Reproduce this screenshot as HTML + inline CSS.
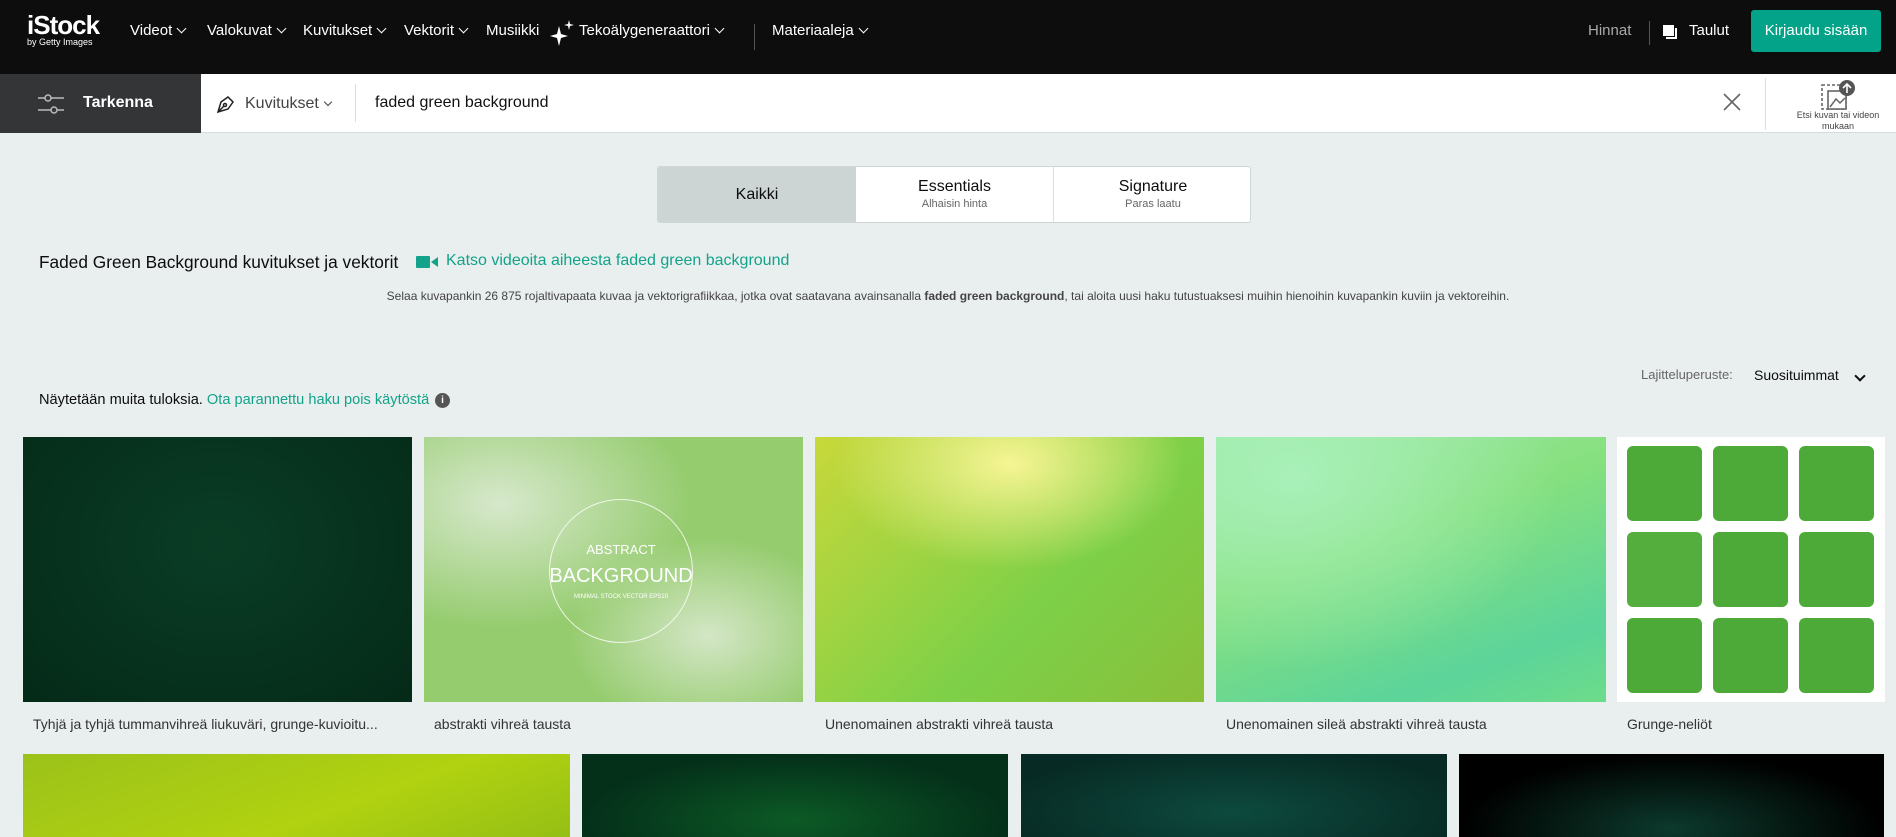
<!DOCTYPE html>
<html><head><meta charset="utf-8"><style>
*{box-sizing:border-box;margin:0;padding:0}
body{width:1896px;height:837px;overflow:hidden;background:#e9eeee;font-family:"Liberation Sans",sans-serif;position:relative;color:#0c0d0c}
.abs{position:absolute}
.hdr{left:0;top:0;width:1896px;height:74px;background:#0c0d0c;color:#fff}
.nav{top:22px;font-size:15px;color:#fff;white-space:nowrap}
.chev{display:inline-block;width:7px;height:7px;border-right:1.6px solid currentColor;border-bottom:1.6px solid currentColor;transform:rotate(45deg);margin-left:6px;position:relative;top:-3px}
.img{position:absolute}
.cap{position:absolute;top:716px;font-size:14px;color:#333}
</style></head><body>
<div class="abs hdr">
 <div class="abs" style="left:27px;top:10px;font-size:26px;font-weight:bold;letter-spacing:-1px">iStock</div>
 <div class="abs" style="left:27px;top:37px;font-size:9px">by Getty Images</div>
 <div class="abs nav" style="left:130px">Videot<span class="chev"></span></div>
 <div class="abs nav" style="left:207px">Valokuvat<span class="chev"></span></div>
 <div class="abs nav" style="left:303px">Kuvitukset<span class="chev"></span></div>
 <div class="abs nav" style="left:404px">Vektorit<span class="chev"></span></div>
 <div class="abs nav" style="left:486px">Musiikki</div>
 <svg class="abs" style="left:550px;top:20px" width="24" height="26" viewBox="0 0 24 26"><path d="M9 6 L11 14 L18 16 L11 18 L9 26 L7 18 L0 16 L7 14Z" fill="#fff"/><path d="M19 0 L20 4 L24 5 L20 6 L19 10 L18 6 L14 5 L18 4Z" fill="#fff"/></svg>
 <div class="abs nav" style="left:579px">Tekoälygeneraattori<span class="chev"></span></div>
 <div class="abs" style="left:754px;top:24px;width:1px;height:26px;background:#555"></div>
 <div class="abs nav" style="left:772px">Materiaaleja<span class="chev"></span></div>
 <div class="abs nav" style="left:1588px;color:#aaa">Hinnat</div>
 <div class="abs" style="left:1649px;top:21px;width:1px;height:24px;background:#555"></div>
 <div class="abs" style="left:1663px;top:25px;width:11px;height:11px;background:#fff"></div>
 <div class="abs" style="left:1666px;top:28px;width:11px;height:11px;border-right:2px solid #fff;border-bottom:2px solid #fff"></div>
 <div class="abs nav" style="left:1689px">Taulut</div>
 <div class="abs" style="left:1751px;top:10px;width:130px;height:42px;background:#02a388;border-radius:3px;color:#fff;font-size:15px;text-align:center;line-height:42px">Kirjaudu sisään</div>
</div>
<div class="abs" style="left:0;top:74px;width:1896px;height:59px;background:#fff;border-bottom:1px solid #d6dbdb"></div>
<div class="abs" style="left:0;top:74px;width:201px;height:59px;background:#333536;color:#fff">
 <svg class="abs" style="left:38px;top:17px" width="26" height="26" viewBox="0 0 26 26" stroke="#bbb" stroke-width="1.5" fill="none"><line x1="0" y1="7" x2="26" y2="7"/><line x1="0" y1="19" x2="26" y2="19"/><circle cx="10" cy="7" r="3" fill="#333536"/><circle cx="16" cy="19" r="3" fill="#333536"/></svg>
 <div class="abs" style="left:83px;top:20px;font-size:16px;font-weight:bold">Tarkenna</div>
</div>
<svg class="abs" style="left:216px;top:94px" width="20" height="20" viewBox="0 0 20 20" fill="none" stroke="#222" stroke-width="1.5"><path d="M2 18 L5 8 L12 3 L17 8 L12 15Z"/><circle cx="9" cy="11" r="1.5"/><line x1="2" y1="18" x2="8" y2="12"/></svg>
<div class="abs" style="left:245px;top:95px;font-size:16px;color:#444">Kuvitukset<span class="chev" style="width:6px;height:6px"></span></div>
<div class="abs" style="left:355px;top:84px;width:1px;height:38px;background:#ddd"></div>
<div class="abs" style="left:375px;top:94px;font-size:16px;color:#111">faded green background</div>
<svg class="abs" style="left:1723px;top:93px" width="18" height="18" viewBox="0 0 18 18" stroke="#666" stroke-width="1.6"><line x1="1" y1="1" x2="17" y2="17"/><line x1="17" y1="1" x2="1" y2="17"/></svg>
<div class="abs" style="left:1765px;top:78px;width:1px;height:52px;background:#ddd"></div>
<svg class="abs" style="left:1820px;top:79px" width="36" height="32" viewBox="0 0 36 32"><rect x="2" y="6" width="24" height="24" fill="none" stroke="#666" stroke-width="1.6" stroke-dasharray="3 2"/><rect x="8" y="12" width="18" height="18" fill="#fff" stroke="#666" stroke-width="1.6"/><path d="M10 28 L16 20 L20 24 L25 19" stroke="#666" fill="none" stroke-width="1.5"/><circle cx="27" cy="9" r="8" fill="#555"/><path d="M27 14 V5 M23 9 L27 5 L31 9" stroke="#fff" stroke-width="1.6" fill="none"/></svg>
<div class="abs" style="left:1780px;top:110px;width:116px;text-align:center;font-size:9px;color:#444;line-height:11px">Etsi kuvan tai videon<br>mukaan</div>

<div class="abs" style="left:657px;top:166px;width:594px;height:57px;background:#fff;border:1px solid #d0d5d5;border-radius:3px;overflow:hidden">
 <div class="abs" style="left:0;top:0;width:198px;height:57px;background:#ccd4d4;font-size:16px;text-align:center;line-height:55px">Kaikki</div>
 <div class="abs" style="left:198px;top:0;width:198px;height:57px;border-right:1px solid #ddd;text-align:center"><div style="font-size:16px;margin-top:11px">Essentials</div><div style="font-size:11px;color:#666;margin-top:2px">Alhaisin hinta</div></div>
 <div class="abs" style="left:396px;top:0;width:198px;height:57px;text-align:center"><div style="font-size:16px;margin-top:11px">Signature</div><div style="font-size:11px;color:#666;margin-top:2px">Paras laatu</div></div>
</div>
<div class="abs" style="left:39px;top:252px;font-size:17.3px">Faded Green Background kuvitukset ja vektorit</div>
<svg class="abs" style="left:416px;top:255px" width="22" height="14" viewBox="0 0 22 14"><rect x="0" y="1" width="14" height="12" rx="1" fill="#13a38a"/><path d="M15 7 L22 2 V12Z" fill="#13a38a"/></svg>
<div class="abs" style="left:446px;top:252px;font-size:16px;color:#13a38a">Katso videoita aiheesta faded green background</div>
<div class="abs" style="left:0;top:289px;width:1896px;text-align:center;font-size:12px;color:#444">Selaa kuvapankin 26 875 rojaltivapaata kuvaa ja vektorigrafiikkaa, jotka ovat saatavana avainsanalla <b>faded green background</b>, tai aloita uusi haku tutustuaksesi muihin hienoihin kuvapankin kuviin ja vektoreihin.</div>
<div class="abs" style="left:1641px;top:367px;font-size:13px;color:#666">Lajitteluperuste:</div>
<div class="abs" style="left:1754px;top:367px;font-size:14px">Suosituimmat</div>
<span class="abs chev" style="left:1850px;top:367px;width:8px;height:8px;border-width:2px"></span>
<div class="abs" style="left:39px;top:392px;font-size:14.6px">Näytetään muita tuloksia. <span style="color:#13a38a">Ota parannettu haku pois käytöstä</span></div>
<div class="abs" style="left:435px;top:393px;width:15px;height:15px;border-radius:50%;background:#555;color:#fff;font-size:10px;text-align:center;line-height:15px;font-weight:bold">i</div>

<div class="img" style="left:23px;top:437px;width:389px;height:265px;background:radial-gradient(ellipse at 50% 40%,#0a3d25,#042a18)"></div>
<div class="img" style="left:424px;top:437px;width:379px;height:265px;background:radial-gradient(ellipse at 20% 25%,#d7e8cc 0,rgba(215,232,204,0) 45%),radial-gradient(ellipse at 75% 75%,#d4e6c6 0,rgba(212,230,198,0) 35%),#95cc6e">
 <div class="abs" style="left:125px;top:62px;width:144px;height:144px;border:1px solid rgba(255,255,255,.8);border-radius:50%"></div>
 <div class="abs" style="left:125px;top:105px;width:144px;text-align:center;color:#fff;font-size:13px">ABSTRACT</div>
 <div class="abs" style="left:125px;top:128px;width:144px;text-align:center;color:#fff;font-size:20px">BACKGROUND</div>
 <div class="abs" style="left:125px;top:157px;width:144px;text-align:center;color:#fff;font-size:6px">MINIMAL STOCK VECTOR EPS10</div>
</div>
<div class="img" style="left:815px;top:437px;width:389px;height:265px;background:radial-gradient(ellipse 45% 40% at 50% 10%,#f6f594,rgba(246,245,148,0) 100%),linear-gradient(135deg,#c8d83a,#7dd048 60%,#8abf3a)"></div>
<div class="img" style="left:1216px;top:437px;width:390px;height:265px;background:radial-gradient(ellipse at 20% 15%,#a8f0b8,rgba(168,240,184,0) 60%),linear-gradient(160deg,#9fe8a8,#86e07e 40%,#5cd49a 80%,#6ddc8a)"></div>
<div class="img" style="left:1617px;top:437px;width:268px;height:265px;background:#fff">
 <div class="abs" style="left:10px;top:9px;width:75px;height:75px;background:#4daa38;border-radius:6px"></div>
 <div class="abs" style="left:96px;top:9px;width:75px;height:75px;background:#4daa38;border-radius:6px"></div>
 <div class="abs" style="left:182px;top:9px;width:75px;height:75px;background:#4daa38;border-radius:6px"></div>
 <div class="abs" style="left:10px;top:95px;width:75px;height:75px;background:#53ae3e;border-radius:6px"></div>
 <div class="abs" style="left:96px;top:95px;width:75px;height:75px;background:#4daa38;border-radius:6px"></div>
 <div class="abs" style="left:182px;top:95px;width:75px;height:75px;background:#4daa38;border-radius:6px"></div>
 <div class="abs" style="left:10px;top:181px;width:75px;height:75px;background:#4daa38;border-radius:6px"></div>
 <div class="abs" style="left:96px;top:181px;width:75px;height:75px;background:#4daa38;border-radius:6px"></div>
 <div class="abs" style="left:182px;top:181px;width:75px;height:75px;background:#4daa38;border-radius:6px"></div>
</div>
<div class="cap" style="left:33px">Tyhjä ja tyhjä tummanvihreä liukuväri, grunge-kuvioitu...</div>
<div class="cap" style="left:434px">abstrakti vihreä tausta</div>
<div class="cap" style="left:825px">Unenomainen abstrakti vihreä tausta</div>
<div class="cap" style="left:1226px">Unenomainen sileä abstrakti vihreä tausta</div>
<div class="cap" style="left:1627px">Grunge-neliöt</div>

<div class="img" style="left:23px;top:754px;width:547px;height:83px;background:linear-gradient(160deg,#9cc21a,#b0d210 60%,#95bf15)"></div>
<div class="img" style="left:582px;top:754px;width:426px;height:83px;background:radial-gradient(ellipse at 50% 80%,#0c5a25,#04301a 70%)"></div>
<div class="img" style="left:1021px;top:754px;width:426px;height:83px;background:radial-gradient(ellipse at 50% 70%,#0d4a3e,#072a24 80%)"></div>
<div class="img" style="left:1459px;top:754px;width:425px;height:83px;background:radial-gradient(ellipse at 50% 90%,#0c3a2c,#000 70%)"></div>
</body></html>
